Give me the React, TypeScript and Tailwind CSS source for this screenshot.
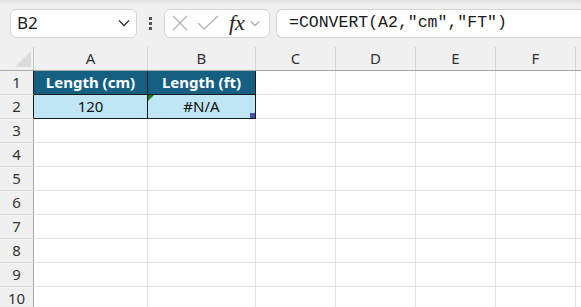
import React from "react";

const cols = [
  { key: "A", w: "w-[114px]" },
  { key: "B", w: "w-[108px]" },
  { key: "C", w: "w-[80px]" },
  { key: "D", w: "w-[80px]" },
  { key: "E", w: "w-[80px]" },
  { key: "F", w: "w-[80px]" },
];

const font = "font-['Noto_Sans',sans-serif]";

function Chevron({ className }: { className?: string }) {
  return (
    <svg viewBox="0 0 12 8" className={className} fill="none" stroke="currentColor" strokeWidth="1.3">
      <path d="M1 1.5 L6 6.5 L11 1.5" />
    </svg>
  );
}

function Toolbar() {
  return (
    <div className="h-[47px] bg-[#f0f0f0] relative">
      <div className="absolute inset-x-0 top-0 h-[6px] bg-gradient-to-b from-[#e2e2e2] to-[#f0f0f0]" />
      <div className="flex items-center h-full pl-[10px]">
        {/* Name box */}
        <div className="w-[127px] h-[29px] mt-[-1px] bg-white border border-[#d6d6d6] rounded-[6px] flex items-center pl-[6px] pr-[6px] justify-between">
          <span className={`text-[17px] text-[#1a1a1a] ${font}`}>B2</span>
          <Chevron className="w-[12px] h-[8px] text-[#333]" />
        </div>
        {/* dots */}
        <div className="w-[27px] flex flex-col items-center gap-[2px]">
          <div className="w-[3px] h-[3px] bg-[#555]" />
          <div className="w-[3px] h-[3px] bg-[#555]" />
          <div className="w-[3px] h-[3px] bg-[#555]" />
        </div>
        {/* fx box */}
        <div className="w-[106px] h-[29px] mt-[-1px] bg-white border border-[#d6d6d6] rounded-[6px] flex items-center pl-[6px]">
          <svg viewBox="0 0 18 18" className="w-[18px] h-[18px] text-[#b4b4b4]" fill="none" stroke="currentColor" strokeWidth="1.3">
            <path d="M2 2 L16 16 M16 2 L2 16" />
          </svg>
          <svg viewBox="0 0 22 18" className="w-[22px] h-[18px] ml-[8px] text-[#b4b4b4]" fill="none" stroke="currentColor" strokeWidth="1.3">
            <path d="M1 9 L7 15 L21 2" />
          </svg>
          <span className="ml-[10px] text-[22px] leading-none italic font-medium text-[#222] font-['Liberation_Serif',serif]">fx</span>
          <Chevron className="ml-[5px] w-[10px] h-[7px] text-[#999]" />
        </div>
        {/* formula */}
        <div className="ml-[6px] flex-1 h-[29px] mt-[-1px] bg-white border border-[#d6d6d6] rounded-l-[6px] border-r-0 flex items-center pl-[12px]">
          <span className="text-[16.5px] text-[#1a1a1a] font-['Liberation_Mono',monospace] leading-none">
            =CONVERT(A2,"cm","FT")
          </span>
        </div>
      </div>
    </div>
  );
}

function ColumnHeader() {
  return (
    <div className="flex h-[24px] bg-[#f0f0f0] border-b border-[#a8a8a8]">
      <div className="w-[34px] shrink-0 border-r border-[#c8c8c8] flex items-end justify-end pr-[2px] pb-[3px]">
        <div className="w-0 h-0 border-l-[16px] border-l-transparent border-b-[16px] border-b-[#dcdcdc]" />
      </div>
      {cols.map((c) => (
        <div
          key={c.key}
          className={`${c.w} shrink-0 border-r border-[#d4d4d4] flex items-center justify-center text-[15px] text-[#333] ${font}`}
        >
          {c.key}
        </div>
      ))}
      <div className="flex-1" />
    </div>
  );
}

function Row({ n }: { n: number }) {
  const isHead = n === 1;
  const isData = n === 2;
  const inTable = isHead || isData;
  return (
    <div className="flex h-[24px]">
      <div
        className={`w-[34px] shrink-0 bg-[#f0f0f0] border-r border-b ${
          inTable ? "border-r-[#1a1a1a]" : "border-r-[#a8a8a8]"
        } border-b-[#dadada] flex items-center justify-center text-[15px] text-[#333] ${font}`}
      >
        {n}
      </div>
      {cols.map((c, i) => {
        const tableCell = inTable && i < 2;
        const cls = tableCell
          ? `border-r border-b border-[#1a1a1a] ${isHead ? "bg-[#156082]" : "bg-[#c0e6f5]"}`
          : "border-r border-b border-[#e1e1e1] bg-white";
        const text =
          isHead && i === 0
            ? "Length (cm)"
            : isHead && i === 1
            ? "Length (ft)"
            : isData && i === 0
            ? "120"
            : isData && i === 1
            ? "#N/A"
            : "";
        return (
          <div
            key={c.key}
            className={`${c.w} shrink-0 relative flex items-center justify-center text-[15px] ${font} ${cls} ${
              isHead ? "text-white font-bold" : "text-[#111]"
            }`}
          >
            {text}
            {isData && i === 1 && (
              <>
                <div className="absolute left-0 top-0 w-0 h-0 border-t-[6px] border-t-[#1e7a1e] border-r-[6px] border-r-transparent" />
                <div className="absolute right-0 bottom-0 w-[5px] h-[5px] bg-[#4a52a8]" />
              </>
            )}
          </div>
        );
      })}
      <div className="flex-1 border-b border-[#e1e1e1] bg-white" />
    </div>
  );
}

export default function App() {
  return (
    <div className="w-[581px] h-[307px] overflow-hidden bg-white">
      <Toolbar />
      <ColumnHeader />
      {[1, 2, 3, 4, 5, 6, 7, 8, 9, 10].map((n) => (
        <Row key={n} n={n} />
      ))}
    </div>
  );
}
